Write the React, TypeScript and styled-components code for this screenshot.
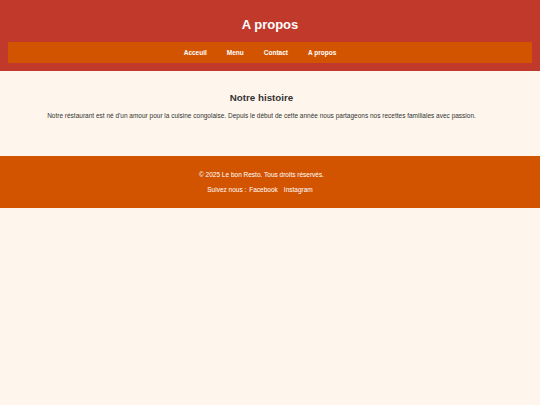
import React from 'react';
import { createGlobalStyle, styled } from 'styled-components';

const GlobalStyle = createGlobalStyle`
  html, body {
    margin: 0;
    padding: 0;
    background-color: #fef6ec;
    font-family: 'Liberation Sans', Arial, sans-serif;
    font-size: 6.5px;
    color: #333333;
  }
`;

const navLinks = ['Acceuil', 'Menu', 'Contact', 'A propos'];

const App = () => {
  return (
    <>
      <GlobalStyle />
      <Header>
        <Title>A propos</Title>
        <Nav>
          {navLinks.map((item) => (
            <NavLink href="#" key={item}>
              {item}
            </NavLink>
          ))}
        </Nav>
      </Header>
      <Main>
        <Section>
          <h2>Notre histoire</h2>
          <p>
            Notre réstaurant est né d'un amour pour la cuisine congolaise.
            Depuis le début de cette année nous partageons nos recettes
            familiales avec passion.
          </p>
        </Section>
      </Main>
      <Footer>
        <p>© 2025 Le bon Resto. Tous droits réservés.</p>
        <p>
          Suivez nous :<SocialLink href="#">Facebook</SocialLink>
          <SocialLink href="#">Instagram</SocialLink>
        </p>
      </Footer>
    </>
  );
};

const Header = styled.header`
  background-color: #c0392b;
  padding: 8px 8px 8px;
  text-align: center;
`;
const Title = styled.h1`
  margin: 9px 0 10px;
  font-size: 13px;
  line-height: 15px;
  font-weight: 700;
  color: #ffffff;
`;
const Nav = styled.nav`
  display: flex;
  justify-content: center;
  background-color: #d35400;
  padding: 6.5px 0;
  line-height: 7.5px;
`;
const NavLink = styled.a`
  color: #ffffff;
  font-weight: 700;
  text-decoration: none;
  margin-right: 20px;
`;
const Main = styled.main`
  padding: 13px 30px 30px 13px;
  text-align: center;
`;
const Section = styled.section`
  h2 {
    font-size: 9.75px;
    line-height: 11.2px;
    margin: 8px 0 9px;
    color: #333333;
  }
  p {
    margin: 6.5px 0;
    line-height: 7.5px;
    color: #333333;
  }
`;
const Footer = styled.footer`
  background-color: #d35400;
  color: #ffffff;
  text-align: center;
  padding: 9px 25px 8px 8px;
  p {
    margin: 6.5px 0;
    line-height: 8px;
  }
`;
const SocialLink = styled.a`
  color: #ffffff;
  text-decoration: none;
  margin: 0 3px;
`;

export default App;
